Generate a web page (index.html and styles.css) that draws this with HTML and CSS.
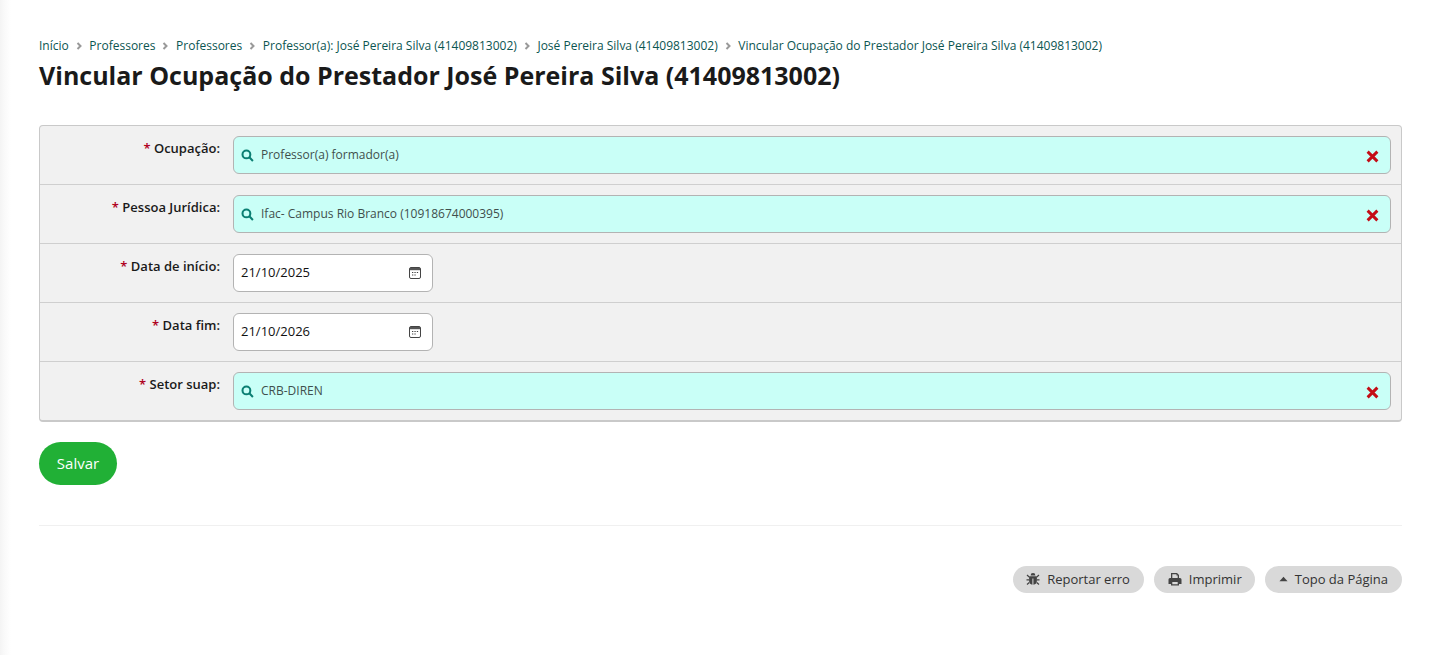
FILE: index.html
```html
<!DOCTYPE html>
<html lang="pt-BR">
<head>
<meta charset="utf-8">
<title>Vincular Ocupação</title>
<link rel="stylesheet" href="styles.css">
</head>
<body>
<main class="page">
  <nav class="crumbs">
    <a>Início</a><svg class="sep" viewBox="0 0 8 8"><path d="M2.500 1 5.500 4 2.500 7"/></svg>
    <a>Professores</a><svg class="sep" viewBox="0 0 8 8"><path d="M2.500 1 5.500 4 2.500 7"/></svg>
    <a>Professores</a><svg class="sep" viewBox="0 0 8 8"><path d="M2.500 1 5.500 4 2.500 7"/></svg>
    <a>Professor(a): José Pereira Silva (41409813002)</a><svg class="sep" viewBox="0 0 8 8"><path d="M2.500 1 5.500 4 2.500 7"/></svg>
    <a>José Pereira Silva (41409813002)</a><svg class="sep" viewBox="0 0 8 8"><path d="M2.500 1 5.500 4 2.500 7"/></svg>
    <a>Vincular Ocupação do Prestador José Pereira Silva (41409813002)</a>
  </nav>
  <h1 class="title">Vincular Ocupação do Prestador José Pereira Silva (41409813002)</h1>
  <form class="form">
    <div class="row">
      <label class="label"><span class="req">*</span> Ocupação:</label>
      <div class="autocomplete">
        <svg class="search" viewBox="0 0 12 12"><circle cx="5" cy="5" r="3.6"/><path d="M7.700 7.700 11 11"/></svg>
        <span class="value">Professor(a) formador(a)</span>
        <svg class="clear" viewBox="0 0 12 12"><path d="M1.500 1.500 10.500 10.500M10.500 1.500 1.500 10.500"/></svg>
      </div>
    </div>
    <div class="row">
      <label class="label"><span class="req">*</span> Pessoa Jurídica:</label>
      <div class="autocomplete">
        <svg class="search" viewBox="0 0 12 12"><circle cx="5" cy="5" r="3.6"/><path d="M7.700 7.700 11 11"/></svg>
        <span class="value">Ifac- Campus Rio Branco (10918674000395)</span>
        <svg class="clear" viewBox="0 0 12 12"><path d="M1.500 1.500 10.500 10.500M10.500 1.500 1.500 10.500"/></svg>
      </div>
    </div>
    <div class="row">
      <label class="label"><span class="req">*</span> Data de início:</label>
      <div class="date">
        <span class="date-value">21/10/2025</span>
        <svg class="cal" viewBox="0 0 12 12"><rect x=".5" y=".5" width="11" height="11" rx="1.5" class="cal-box"/><rect x="1" y="1" width="10" height="2.2" class="cal-top"/><path d="M3 5.500h1.300M5.400 5.500h1.300M7.800 5.500h1.300M3 8h1.300M5.400 8h1.300" class="cal-dots"/></svg>
      </div>
    </div>
    <div class="row">
      <label class="label"><span class="req">*</span> Data fim:</label>
      <div class="date">
        <span class="date-value">21/10/2026</span>
        <svg class="cal" viewBox="0 0 12 12"><rect x=".5" y=".5" width="11" height="11" rx="1.5" class="cal-box"/><rect x="1" y="1" width="10" height="2.2" class="cal-top"/><path d="M3 5.500h1.300M5.400 5.500h1.300M7.800 5.500h1.300M3 8h1.300M5.400 8h1.300" class="cal-dots"/></svg>
      </div>
    </div>
    <div class="row">
      <label class="label"><span class="req">*</span> Setor suap:</label>
      <div class="autocomplete">
        <svg class="search" viewBox="0 0 12 12"><circle cx="5" cy="5" r="3.6"/><path d="M7.700 7.700 11 11"/></svg>
        <span class="value">CRB-DIREN</span>
        <svg class="clear" viewBox="0 0 12 12"><path d="M1.500 1.500 10.500 10.500M10.500 1.500 1.500 10.500"/></svg>
      </div>
    </div>
  </form>
  <div class="submit-row"><button class="save" type="button">Salvar</button></div>
  <hr class="rule">
  <div class="tools">
    <a class="tool">
      <svg class="tool-icon" viewBox="0 0 14 14"><path d="M4.600 3.400a2.400 2.400 0 0 1 4.800 0z"/><path d="M3.600 4.200h6.800c.3 0 .5.2.5.5v4.100a3.900 3.900 0 0 1-3.500 3.900V6.500h-1v6.200a3.900 3.900 0 0 1-3.300-3.900V4.700c0-.3.2-.5.5-.5z"/><path class="legs" d="M1 3l2.200 2M13 3l-2.200 2M.5 7.800H3M13.500 7.800H11M1 12.500l2.300-2M13 12.500l-2.300-2"/></svg>
      Reportar erro
    </a>
    <a class="tool tool-print">
      <svg class="tool-icon" viewBox="0 0 14 14"><path fill-rule="evenodd" d="M3 1h6l2 2v3h1a1.500 1.500 0 0 1 1.500 1.500V12H11v1.500H3V12H.5V7.500A1.500 1.500 0 0 1 2 6h1zm1.300 1.300V6h5.400V3.500H8.500V2.300zM4.300 10v2.200h5.400V10z"/></svg>
      Imprimir
    </a>
    <a class="tool tool-top">
      <svg class="tool-icon tri" viewBox="0 0 10 6"><path d="M5 .5 9.500 5.500H.5z"/></svg>
      Topo da Página
    </a>
  </div>
</main>
</body>
</html>
```
FILE: styles.css
```css
* { box-sizing: border-box; }
html, body { margin: 0; padding: 0; }
body {
  min-height: 655px;
  background: linear-gradient(to right, #f4f4f4 0, #fafafa 5px, #fff 11px);
  font-family: "Open Sans", sans-serif;
  color: #1a1a1a;
}
.page { padding: 38px 32px 0 39px; }
.crumbs {
  display: flex;
  align-items: center;
  height: 16px;
  font-size: 12px;
  line-height: 16px;
  color: #0b5551;
  white-space: nowrap;
}
.sep { width: 8px; height: 8px; margin: 0 6.600px 0 6px; fill: none; stroke: #999; stroke-width: 2; }
.title {
  margin: 4px 0 0;
  font-size: 25px;
  line-height: 34px;
  font-weight: 700;
  color: #1a1a1a;
}
.form {
  margin-top: 33px;
  background: #f1f1f1;
  border: 1px solid #c9c9c9;
  border-bottom-width: 2px;
  border-radius: 4px;
}
.row {
  display: flex;
  padding: 10px;
  height: 59px;
  border-bottom: 1px solid #cfcfcf;
}
.row:last-child { height: 58px; border-bottom: 0; }
.label {
  width: 170px;
  margin-right: 13px;
  padding-top: 3px;
  flex: none;
  text-align: right;
  font-size: 13px;
  line-height: 18px;
  font-weight: 600;
  color: #1a1a1a;
}
.req { color: #b00020; }
.autocomplete {
  flex: 1;
  height: 38px;
  display: flex;
  align-items: center;
  padding: 0 11px 0 7px;
  background: #c9fff7;
  border: 1px solid #b3b3b3;
  border-radius: 6px;
}
.search { width: 13px; height: 13px; fill: none; stroke: #0b7f73; stroke-width: 1.900; flex: none; }
.value { margin-left: 7px; padding-bottom: 2px; flex: 1; font-size: 12px; color: #3f4f4d; }
.clear { width: 13px; height: 13px; fill: none; stroke: #c40d16; stroke-width: 2.700; flex: none; position: relative; top: 1px; }
.date {
  width: 200px;
  height: 38px;
  display: flex;
  align-items: center;
  justify-content: space-between;
  padding: 0 11px 0 7px;
  background: #fff;
  border: 1px solid #b3b3b3;
  border-radius: 6px;
}
.date-value { padding-bottom: 2px; font-size: 13px; color: #111; }
.cal { width: 12px; height: 12px; flex: none; }
.cal-box { fill: #fff; stroke: #444; stroke-width: 1; }
.cal-top { fill: #555; }
.cal-dots { stroke: #444; fill: none; stroke-width: 1.200; }
.submit-row { margin-top: 20px; }
.save {
  display: block;
  width: 78px;
  height: 43px;
  border: 0;
  border-radius: 22px;
  background: #21b036;
  color: #fff;
  font-family: "Open Sans", sans-serif;
  font-size: 15px;
  padding: 0 0 2px;
}
.rule { margin: 40px 0 0; border: 0; border-top: 1px solid #f0f0f0; }
.tools { display: flex; justify-content: flex-end; gap: 10px; margin-top: 40px; }
.tool {
  display: flex;
  align-items: center;
  height: 27px;
  padding: 0 14px 2px 13px;
  gap: 7px;
  border-radius: 14px;
  background: #d9d9d9;
  font-size: 13px;
  color: #333;
}
.tool-print { padding: 0 13px 2px 14px; }
.tool-top { padding-left: 14px; }
.tool-icon { width: 14px; height: 14px; fill: #444; flex: none; }
.tool-icon.tri { width: 9px; height: 6px; }
.legs { fill: none; stroke: #444; stroke-width: 1.200; }
```
